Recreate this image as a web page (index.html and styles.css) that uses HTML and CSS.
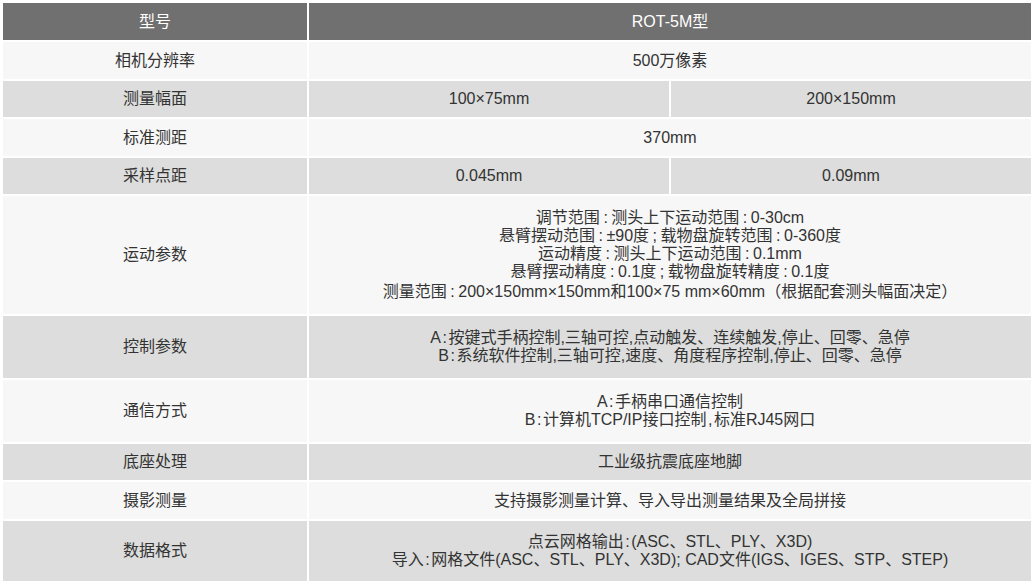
FILE: index.html
```html
<!DOCTYPE html>
<html lang="zh-CN">
<head>
<meta charset="utf-8">
<title>ROT-5M型 参数</title>
<link rel="stylesheet" href="styles.css">
</head>
<body>
<table class="spec">
  <colgroup>
    <col class="c-label">
    <col class="c-val">
    <col class="c-val">
  </colgroup>
  <thead>
    <tr class="r-37">
      <th>型号</th>
      <th colspan="2">ROT-5M型</th>
    </tr>
  </thead>
  <tbody>
    <tr class="r-37 light">
      <td>相机分辨率</td>
      <td colspan="2">500万像素</td>
    </tr>
    <tr class="r-36 dark">
      <td>测量幅面</td>
      <td>100×75mm</td>
      <td>200×150mm</td>
    </tr>
    <tr class="r-37 light">
      <td>标准测距</td>
      <td colspan="2">370mm</td>
    </tr>
    <tr class="r-36 dark">
      <td>采样点距</td>
      <td>0.045mm</td>
      <td>0.09mm</td>
    </tr>
    <tr class="r-118 light">
      <td>运动参数</td>
      <td colspan="2" class="multi motion">调节范围<span class="pc">:</span>测头上下运动范围<span class="pc">:</span>0-30cm<br>悬臂摆动范围<span class="pc">:</span>±90度<span class="pc">;</span>载物盘旋转范围<span class="pc">:</span>0-360度<br>运动精度<span class="pc">:</span>测头上下运动范围<span class="pc">:</span>0.1mm<br>悬臂摆动精度<span class="pc">:</span>0.1度<span class="pc">;</span>载物盘旋转精度<span class="pc">:</span>0.1度<br>测量范围<span class="pc">:</span>200×150mm×150mm和100×75 mm×60mm<span class="fw">（</span>根据配套测头幅面决定<span class="fw">）</span></td>
    </tr>
    <tr class="r-62 dark">
      <td>控制参数</td>
      <td colspan="2" class="multi">A<span class="ps">:</span>按键式手柄控制,三轴可控,点动触发、连续触发,停止、回零、急停<br>B<span class="ps">:</span>系统软件控制,三轴可控,速度、角度程序控制,停止、回零、急停</td>
    </tr>
    <tr class="r-62 light">
      <td>通信方式</td>
      <td colspan="2" class="multi">A<span class="ps">:</span>手柄串口通信控制<br>B<span class="ps">:</span>计算机TCP/IP接口控制<span class="ps">,</span>标准RJ45网口</td>
    </tr>
    <tr class="r-36 dark">
      <td>底座处理</td>
      <td colspan="2">工业级抗震底座地脚</td>
    </tr>
    <tr class="r-37 light">
      <td>摄影测量</td>
      <td colspan="2">支持摄影测量计算、导入导出测量结果及全局拼接</td>
    </tr>
    <tr class="r-60 dark">
      <td>数据格式</td>
      <td colspan="2" class="multi data">点云网格输出<span class="ps">:</span>(ASC、STL、PLY、X3D)<br>导入<span class="ps">:</span>网格文件(ASC、STL、PLY、X3D); CAD文件(IGS、IGES、STP、STEP)</td>
    </tr>
  </tbody>
</table>
</body>
</html>
```
FILE: styles.css
```css
html, body {
  margin: 0;
  padding: 0;
  background: #ffffff;
}

body {
  font-family: "Liberation Sans", "Noto Sans CJK SC", sans-serif;
  font-size: 16px;
  color: #333333;
}

.spec {
  margin: 1px 0 0 1px;
  width: 1032px;
  table-layout: fixed;
  border-collapse: separate;
  border-spacing: 2px;
}

.c-label { width: 304px; }
.c-val { width: 360px; }

.spec th,
.spec td {
  padding: 0;
  text-align: center;
  vertical-align: middle;
  line-height: 18px;
  font-weight: normal;
  white-space: nowrap;
}

.spec th {
  background: #707070;
  color: #ffffff;
}

.light td { background: #f7f7f7; }
.dark td { background: #dcdddc; }

.r-36 td { height: 36px; }
.r-37 th,
.r-37 td { height: 37px; }
.r-60 td { height: 60px; }
.r-62 td { height: 62px; }
.r-118 td { height: 118px; }

.multi { line-height: 18.5px; }
.motion { line-height: 19.5px; }

.pc { padding: 0 3.5px; }
.ps { padding: 0 1.5px; }
.fw { font-family: "Noto Sans CJK SC", sans-serif; }
```
